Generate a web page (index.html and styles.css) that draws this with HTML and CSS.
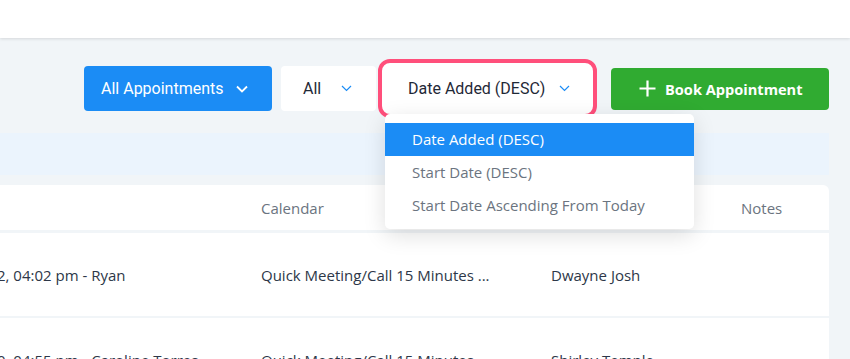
FILE: index.html
```html
<!DOCTYPE html>
<html lang="en">

<head>
    <meta charset="UTF-8">
    <meta name="viewport" content="width=device-width, initial-scale=1.0">
    <title>Appointments</title>
    <link rel="stylesheet" href="styles.css">
</head>

<body>

    <div class="topbar"></div>

    <div class="toolbar">
        <button class="btn btn-blue">
            All Appointments
            <svg width="12" height="8" viewBox="0 0 12 8"><path d="M1 1.5l5 5 5-5" fill="none" stroke="#fff" stroke-width="1.8"/></svg>
        </button>

        <button class="btn btn-white">
            All
            <svg width="11" height="7" viewBox="0 0 11 7"><path d="M1 1l4.5 4.5L10 1" fill="none" stroke="#1b8cf5" stroke-width="1.2"/></svg>
        </button>

        <div class="sort-select">
            <div class="sort-value">
                Date Added (DESC)
                <svg width="11" height="7" viewBox="0 0 11 7"><path d="M1 1l4.5 4.5L10 1" fill="none" stroke="#1b8cf5" stroke-width="1.2"/></svg>
            </div>
            <!-- open dropdown -->
            <ul class="sort-menu">
                <li class="active">Date Added (DESC)</li>
                <li>Start Date (DESC)</li>
                <li>Start Date Ascending From Today</li>
            </ul>
        </div>

        <button class="btn btn-green">
            <svg width="17" height="17" viewBox="0 0 17 17"><path d="M8.5 0.5v16M0.5 8.5h16" fill="none" stroke="#fff" stroke-width="2.2"/></svg>
            Book Appointment
        </button>
    </div>

    <div class="info-band"></div>

    <div class="table-card">
        <div class="row head">
            <div class="cell c1"></div>
            <div class="cell c2">Calendar</div>
            <div class="cell c3"></div>
            <div class="cell c4">Notes</div>
        </div>
        <div class="row">
            <div class="cell c1 clip">2, 04:02 pm - Ryan</div>
            <div class="cell c2">Quick Meeting/Call 15 Minutes ...</div>
            <div class="cell c3">Dwayne Josh</div>
            <div class="cell c4"></div>
        </div>
        <div class="row">
            <div class="cell c1 clip">0, 04:55 pm - Caroline Torres</div>
            <div class="cell c2">Quick Meeting/Call 15 Minutes ...</div>
            <div class="cell c3">Shirley Temple</div>
            <div class="cell c4"></div>
        </div>
    </div>

</body>

</html>
```

FILE: styles.css
```css
/* Reset */
* {
    margin: 0;
    padding: 0;
    box-sizing: border-box;
}

body {
    font-family: 'Open Sans', sans-serif;
    background-color: #f1f5f8;
    color: #2d3748;
    overflow: hidden;
}

/* Top bar */
.topbar {
    height: 38px;
    background-color: #fff;
    box-shadow: 0 1px 3px rgba(0, 0, 0, 0.12);
}

/* Toolbar */
.toolbar {
    display: flex;
    justify-content: flex-end;
    align-items: center;
    padding: 21px 21px 15px 0;
}

.btn {
    display: flex;
    align-items: center;
    border: none;
    border-radius: 4px;
    font-family: 'Roboto', sans-serif;
    font-size: 16px;
    cursor: pointer;
}

.btn-blue {
    height: 45px;
    width: 188px;
    padding: 0 24px 0 17px;
    justify-content: space-between;
    background-color: #1b8cf5;
    color: #fff;
}

.btn-white {
    height: 45px;
    width: 95px;
    margin-left: 9px;
    padding: 0 24px 0 22px;
    justify-content: space-between;
    background-color: #fff;
    color: #1f2937;
}

.btn-green {
    height: 42px;
    width: 218px;
    margin-left: 14px;
    padding: 0 0 0 28px;
    gap: 9px;
    background-color: #30ab31;
    color: #fff;
    font-family: 'Open Sans', sans-serif;
    font-weight: 700;
    font-size: 14.6px;
}

/* Sort select with open menu */
.sort-select {
    position: relative;
    margin-left: 2px;
}

.sort-value {
    display: flex;
    align-items: center;
    justify-content: space-between;
    width: 219px;
    height: 59px;
    padding: 0 23px 0 26px;
    border: 4px solid #ff4f7b;
    border-radius: 12px;
    background-color: #fff;
    font-family: 'Roboto', sans-serif;
    font-size: 16px;
    color: #1f2937;
}

.sort-menu {
    position: absolute;
    top: 55px;
    left: 7px;
    width: 309px;
    padding: 9px 0 7px;
    list-style: none;
    background-color: #fff;
    border-radius: 5px;
    box-shadow: 0 6px 22px rgba(0, 0, 0, 0.13);
    z-index: 10;
}

.sort-menu li {
    height: 33px;
    line-height: 33px;
    padding-left: 27px;
    font-size: 15px;
    color: #6b7480;
}

.sort-menu li.active {
    background-color: #1b8cf5;
    color: #fff;
}

/* Info band */
.info-band {
    width: 829px;
    height: 42px;
    background-color: #ebf4fd;
}

/* Table */
.table-card {
    width: 829px;
    margin-top: 10px;
    background-color: #fff;
    border-top-right-radius: 6px;
}

.row {
    display: flex;
    align-items: center;
    height: 85px;
    border-bottom: 2px solid #f1f5f8;
    font-size: 15px;
}

.row.head {
    height: 48px;
    border-bottom-width: 3px;
    color: #6b7480;
}

.cell {
    white-space: nowrap;
    overflow: hidden;
}

.c1 {
    width: 261px;
}

.c1.clip {
    text-indent: -3px;
}

.c2 {
    width: 290px;
}

.c3 {
    width: 190px;
}

.c4 {
    flex: 1;
}
```
